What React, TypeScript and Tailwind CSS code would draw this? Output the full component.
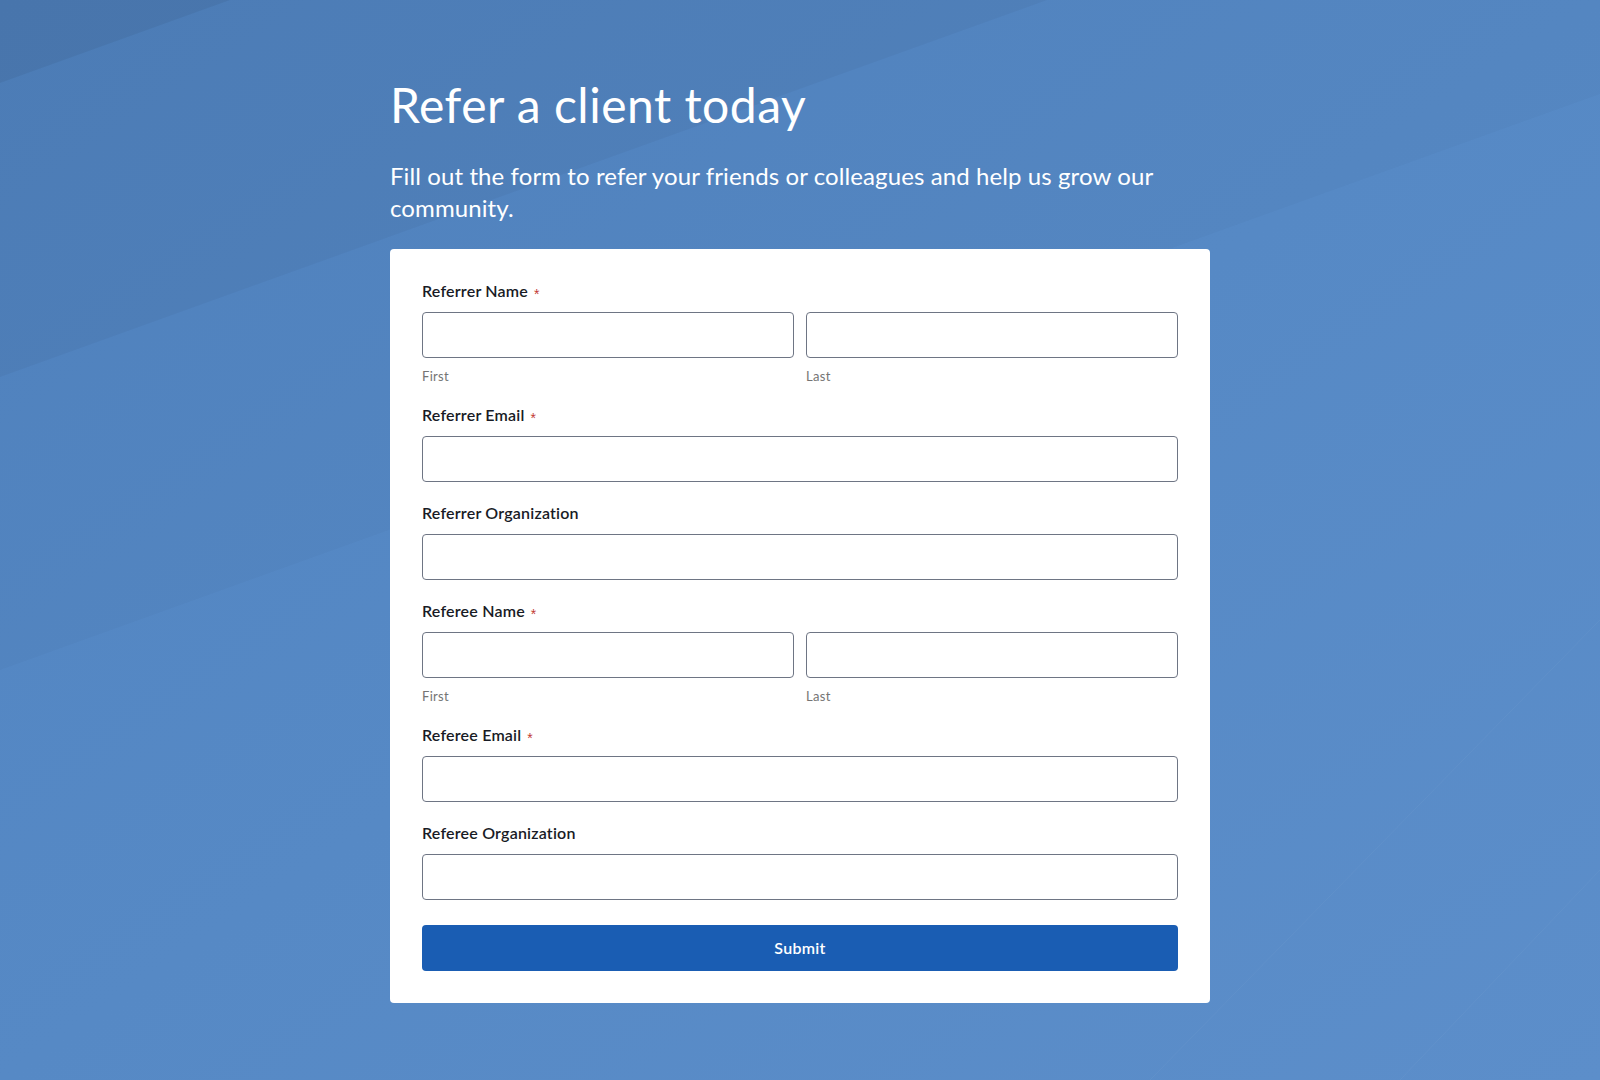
import React from "react";

type FieldProps = {
  label: string;
  required?: boolean;
  split?: boolean;
};

function Label({ text, required }: { text: string; required?: boolean }) {
  return (
    <label className="mb-[11px] flex h-5 items-center text-[16px] font-semibold leading-5 tracking-[0.2px] text-[#181b25]">
      {text}
      {required && (
        <span className="relative top-[3px] ml-[6px] font-['Liberation_Sans',sans-serif] text-[14px] font-normal leading-none text-[#c23934]">
          *
        </span>
      )}
    </label>
  );
}

function Input() {
  return (
    <input
      type="text"
      className="block h-[46px] w-full rounded-[4px] border border-[#6e7584] bg-white px-3 text-[15px] text-[#181b25] outline-none"
    />
  );
}

function Helper({ text }: { text: string }) {
  return <p className="mt-[10px] text-[13px] leading-4 tracking-[0.3px] text-[#747474]">{text}</p>;
}

function Field({ label, required, split }: FieldProps) {
  return (
    <div className="mb-[21px]">
      <Label text={label} required={required} />
      {split ? (
        <div className="grid grid-cols-2 gap-3">
          <div>
            <Input />
            <Helper text="First" />
          </div>
          <div>
            <Input />
            <Helper text="Last" />
          </div>
        </div>
      ) : (
        <Input />
      )}
    </div>
  );
}

// 배경 사선 무늬
function Backdrop() {
  return (
    <svg
      className="pointer-events-none absolute inset-0 h-full w-full"
      viewBox="0 0 1600 1080"
      preserveAspectRatio="none"
    >
      <defs>
        <linearGradient id="base" x1="0" y1="0" x2="1" y2="1">
          <stop offset="0" stopColor="#5184c1" />
          <stop offset="0.5" stopColor="#5689c5" />
          <stop offset="1" stopColor="#5c8eca" />
        </linearGradient>
      </defs>
      <rect width="1600" height="1080" fill="url(#base)" />
      <polygon points="0,0 1861,0 0,670" fill="#000" opacity="0.02" />
      <polygon points="0,0 1047,0 0,377" fill="#000" opacity="0.035" />
      <polygon points="0,0 230,0 0,83" fill="#000" opacity="0.05" />
      <line x1="1150" y1="1080" x2="1600" y2="620" stroke="#fff" strokeOpacity="0.04" />
      <line x1="1400" y1="1080" x2="1600" y2="870" stroke="#fff" strokeOpacity="0.04" />
    </svg>
  );
}

export default function App() {
  return (
    <main
      className="relative min-h-screen w-full overflow-hidden"
      style={{ fontFamily: "Lato, 'Open Sans', sans-serif" }}
    >
      <Backdrop />

      <div className="relative mx-auto w-[820px] pt-[77px] pb-[76px]">
        {/* =================== 머리말 =================== */}
        <h1 className="text-[48px] font-normal leading-[56px] tracking-[0.5px] text-white">
          Refer a client today
        </h1>
        <p className="mt-[27px] w-[790px] text-[24px] leading-[32px] tracking-[0.1px] text-white">
          Fill out the form to refer your friends or colleagues and help us grow our community.
        </p>

        {/* =================== 폼 카드 =================== */}
        <form
          className="mt-[25px] flex flex-col rounded-[4px] bg-white p-8"
          onSubmit={(e) => e.preventDefault()}
        >
          <Field label="Referrer Name" required split />
          <Field label="Referrer Email" required />
          <Field label="Referrer Organization" />
          <Field label="Referee Name" required split />
          <Field label="Referee Email" required />
          <Field label="Referee Organization" />

          <button
            type="submit"
            className="mt-[4px] flex h-[46px] w-full items-center justify-center rounded-[4px] bg-[#1a5db3] text-[16px] font-semibold tracking-[0.3px] text-white"
          >
            Submit
          </button>
        </form>
      </div>
    </main>
  );
}
